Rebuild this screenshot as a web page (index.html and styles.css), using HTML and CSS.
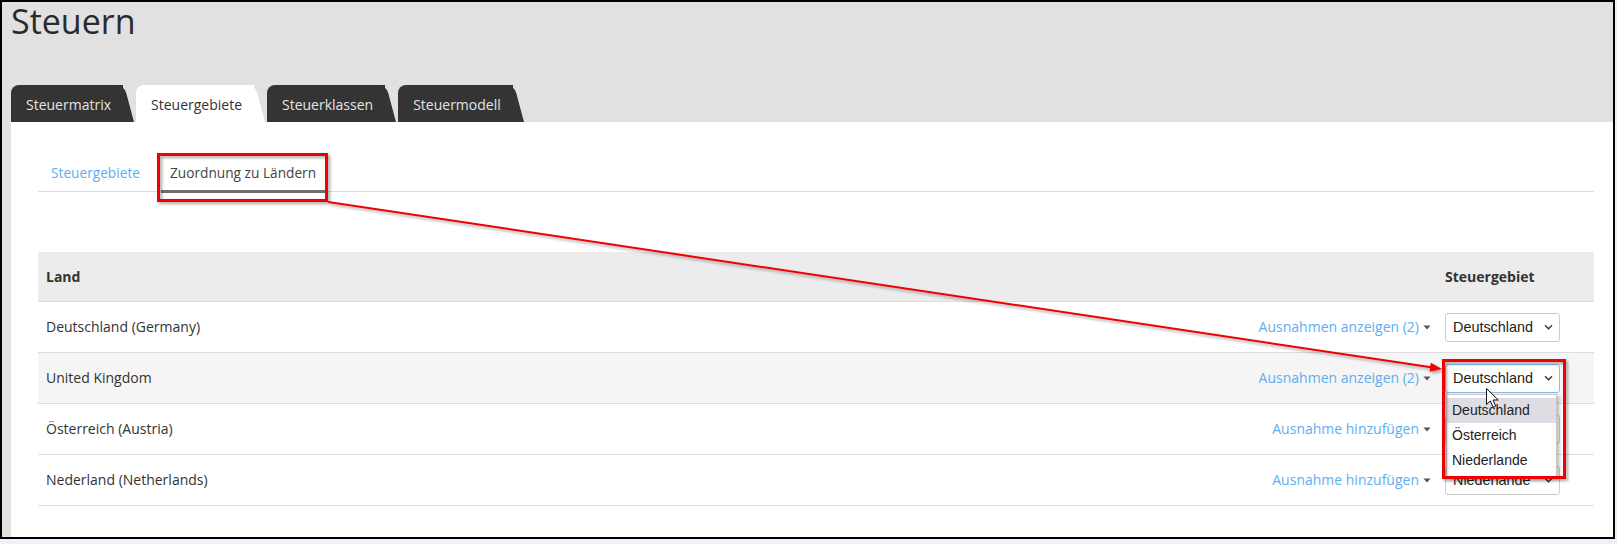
FILE: index.html
```html
<!DOCTYPE html>
<html lang="de">
<head>
<meta charset="utf-8">
<title>Steuern</title>
<link rel="stylesheet" href="styles.css">
</head>
<body>
<div class="frame">
  <div class="header">
    <h1 class="title">Steuern</h1>
    <div class="tabs">
      <div class="tab">Steuermatrix</div>
      <div class="tab active">Steuergebiete</div>
      <div class="tab">Steuerklassen</div>
      <div class="tab">Steuermodell</div>
    </div>
  </div>
  <div class="panel">
    <div class="subnav">
      <div class="subtab link">Steuergebiete</div>
      <div class="subtab current">Zuordnung zu Ländern</div>
    </div>
    <div class="table">
      <div class="row head">
        <div class="cell">Land</div>
        <div class="cell"></div>
        <div class="cell">Steuergebiet</div>
      </div>
      <div class="row">
        <div class="cell">Deutschland (Germany)</div>
        <div class="cell action"><span class="link">Ausnahmen anzeigen (2)</span><svg class="caret" width="8" height="5" viewBox="0 0 8 5"><path d="M0.5 0.5h7L4 4.5z" fill="#555"/></svg></div>
        <div class="cell"><div class="select"><span>Deutschland</span><svg class="chev" width="9" height="6" viewBox="0 0 9 6"><path d="M1 1.2l3.5 3.5 3.5-3.5" fill="none" stroke="#333" stroke-width="1.4"/></svg></div></div>
      </div>
      <div class="row hover">
        <div class="cell">United Kingdom</div>
        <div class="cell action"><span class="link">Ausnahmen anzeigen (2)</span><svg class="caret" width="8" height="5" viewBox="0 0 8 5"><path d="M0.5 0.5h7L4 4.5z" fill="#555"/></svg></div>
        <div class="cell">
          <div class="select focus"><span>Deutschland</span><svg class="chev" width="9" height="6" viewBox="0 0 9 6"><path d="M1 1.2l3.5 3.5 3.5-3.5" fill="none" stroke="#333" stroke-width="1.4"/></svg>
            <div class="dropdown">
              <div class="option selected">Deutschland</div>
              <div class="option">Österreich</div>
              <div class="option">Niederlande</div>
            </div>
          </div>
        </div>
      </div>
      <div class="row">
        <div class="cell">Österreich (Austria)</div>
        <div class="cell action"><span class="link">Ausnahme hinzufügen</span><svg class="caret" width="8" height="5" viewBox="0 0 8 5"><path d="M0.5 0.5h7L4 4.5z" fill="#555"/></svg></div>
        <div class="cell"><div class="select covered"><span>Österreich</span><svg class="chev" width="9" height="6" viewBox="0 0 9 6"><path d="M1 1.2l3.5 3.5 3.5-3.5" fill="none" stroke="#333" stroke-width="1.4"/></svg></div></div>
      </div>
      <div class="row">
        <div class="cell">Nederland (Netherlands)</div>
        <div class="cell action"><span class="link">Ausnahme hinzufügen</span><svg class="caret" width="8" height="5" viewBox="0 0 8 5"><path d="M0.5 0.5h7L4 4.5z" fill="#555"/></svg></div>
        <div class="cell"><div class="select"><span>Niederlande</span><svg class="chev" width="9" height="6" viewBox="0 0 9 6"><path d="M1 1.2l3.5 3.5 3.5-3.5" fill="none" stroke="#333" stroke-width="1.4"/></svg></div></div>
      </div>
    </div>
  </div>
</div>
<svg class="annot" width="1617" height="544" viewBox="0 0 1617 544">
  <defs>
    <filter id="sh" x="-10%" y="-10%" width="120%" height="130%">
      <feDropShadow dx="2" dy="2" stdDeviation="1.4" flood-color="#000" flood-opacity="0.35"/>
    </filter>
  </defs>
  <g filter="url(#sh)">
    <rect x="158.5" y="154.5" width="168" height="46" fill="none" stroke="#f00000" stroke-width="3"/>
    <line x1="328" y1="202" x2="1431" y2="367.2" stroke="#f00000" stroke-width="2"/>
    <polygon points="1442,369 1429.5,371.7 1430.8,362.8" fill="#f00000"/>
    <rect x="1443.5" y="360.5" width="121" height="117" fill="none" stroke="#f00000" stroke-width="3"/>
  </g>
  <path d="M1486.5 388.5v16l3.8-3.6 2.8 6.4 2.6-1.1-2.7-6.2h5.2z" fill="#fff" stroke="#111" stroke-width="1" stroke-linejoin="round"/>
</svg>
</body>
</html>
```

FILE: styles.css
```css
html, body {
  margin: 0;
  padding: 0;
}
body {
  background: #edf1f8;
  position: relative;
  width: 1617px;
  height: 544px;
  overflow: hidden;
  font-family: "Open Sans", "Liberation Sans", sans-serif;
  color: #333;
}
.frame {
  box-sizing: border-box;
  width: 1615px;
  height: 539px;
  border: 2px solid #000;
  background: #e1e1e1;
  display: flex;
  flex-direction: column;
}
.header {
  padding-left: 9px;
}
.title {
  margin: 0;
  font-size: 34px;
  line-height: 38px;
  font-weight: 400;
  color: #2a2a2a;
}
.tabs {
  display: flex;
  margin-top: 45px;
  height: 37px;
}
.tab {
  position: relative;
  z-index: 0;
  box-sizing: border-box;
  height: 37px;
  padding: 3px 12px 0 15px;
  margin-right: 13px;
  line-height: 34px;
  font-size: 14px;
  color: #e4e4e4;
  background: #343434;
  border-radius: 8px 0 0 0;
}
.tab::after {
  content: "";
  position: absolute;
  z-index: -1;
  top: 0;
  bottom: 0;
  right: -11px;
  width: 24px;
  background: inherit;
  border-radius: 0 8px 0 0;
  transform: skewX(15deg);
  transform-origin: bottom left;
}
.tab.active {
  background: #fff;
  color: #333;
}
.panel {
  flex: 1;
  margin-left: 9px;
  background: #fff;
  padding: 31px 19px 0 27px;
}
.subnav {
  display: flex;
  gap: 12px;
  height: 38px;
  padding-left: 4px;
  border-bottom: 1px solid #dcdcdc;
}
.subtab {
  box-sizing: border-box;
  height: 40px;
  padding: 10px 9px 9px;
  font-size: 13.7px;
  line-height: 19px;
  border-bottom: 3px solid transparent;
}
.subtab.link {
  color: #5eaef0;
}
.subtab.current {
  color: #444;
  border-bottom-color: #707070;
}
.table {
  margin-top: 60px;
  font-size: 14px;
}
.row {
  display: grid;
  grid-template-columns: 1fr auto 157px;
  align-items: center;
  height: 50px;
  border-bottom: 1px solid #dddddd;
}
.row.head {
  height: 49px;
  background: #ececec;
  font-weight: 700;
}
.row.hover {
  background: #f5f5f5;
}
.cell {
  padding: 0 8px;
  line-height: 20px;
}
.cell.action {
  padding: 0 6px 0 8px;
  display: flex;
  align-items: center;
  justify-content: flex-end;
}
.link {
  color: #5eaef0;
}
.caret {
  margin-left: 4px;
  display: block;
}
.select {
  position: relative;
  box-sizing: border-box;
  width: 115px;
  height: 29px;
  padding: 0 6px 0 7px;
  border: 1px solid #cccccc;
  border-radius: 3px;
  background: #fff;
  display: flex;
  align-items: center;
  justify-content: space-between;
  font-family: "Liberation Sans", Arial, sans-serif;
  font-size: 14.4px;
  color: #222;
}
.select.focus {
  border-color: #8cbbe9;
}
.select.covered span {
  visibility: hidden;
}
.chev {
  display: block;
}
.dropdown {
  position: absolute;
  top: 29px;
  left: 0;
  width: 111px;
  box-sizing: border-box;
  padding: 3px 0;
  background: #fff;
  border: 1px solid #c8c8c8;
  box-shadow: 2px 2px 4px rgba(0, 0, 0, 0.3);
  z-index: 5;
  font-size: 14px;
}
.option {
  height: 25px;
  line-height: 25px;
  padding-left: 5px;
  color: #222;
}
.option.selected {
  background: #dddde3;
}
.annot {
  position: absolute;
  left: 0;
  top: 0;
  pointer-events: none;
  z-index: 10;
}
```
